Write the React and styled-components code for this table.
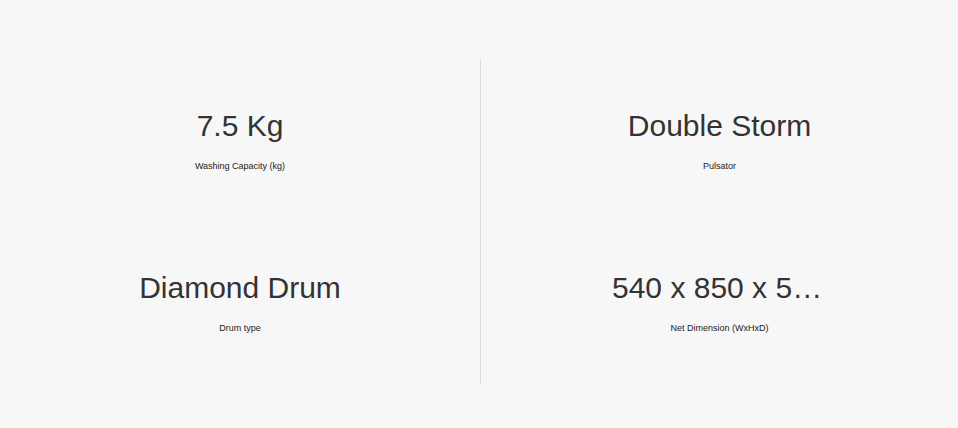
import styled, { createGlobalStyle } from "styled-components";

const GlobalStyle = createGlobalStyle`
  html, body {
    margin: 0;
    padding: 0;
    background: #f7f7f7;
  }
  body {
    font-family: "Liberation Sans", Arial, Helvetica, sans-serif;
    color: #333;
  }
`;

const Page = styled.div`
  width: 958px;
  height: 428px;
  background: #f7f7f7;
  padding-top: 60px;
  box-sizing: border-box;
`;

const SpecGrid = styled.div`
  display: grid;
  grid-template-columns: 480px 478px;
`;

const Column = styled.div`
  display: grid;
  grid-template-rows: 162px 162px;
  border-left: ${(p) => (p.$divided ? "1px solid #dcdcdc" : "none")};
`;

const Spec = styled.div`
  display: flex;
  flex-direction: column;
  align-items: center;
  justify-content: flex-start;
  gap: 17px;
  padding-top: 48px;
`;

// long values are cut with an ellipsis, as on the product page
const Value = styled.div`
  font-size: 30px;
  line-height: 36px;
  color: #333;
  max-width: 215px;
  white-space: nowrap;
  overflow: hidden;
  text-overflow: ellipsis;
`;

const Label = styled.div`
  font-size: 9px;
  line-height: 11px;
  color: #222;
`;

const specs = [
  [
    { value: "7.5 Kg", label: "Washing Capacity (kg)" },
    { value: "Diamond Drum", label: "Drum type" },
  ],
  [
    { value: "Double Storm", label: "Pulsator" },
    { value: "540 x 850 x 560 mm", label: "Net Dimension (WxHxD)" },
  ],
];

export default function App() {
  return (
    <>
      <GlobalStyle />
      <Page>
        <SpecGrid>
          {specs.map((col, i) => (
            <Column key={i} $divided={i > 0}>
              {col.map((s) => (
                <Spec key={s.label}>
                  <Value title={s.value}>{s.value}</Value>
                  <Label>{s.label}</Label>
                </Spec>
              ))}
            </Column>
          ))}
        </SpecGrid>
      </Page>
    </>
  );
}
